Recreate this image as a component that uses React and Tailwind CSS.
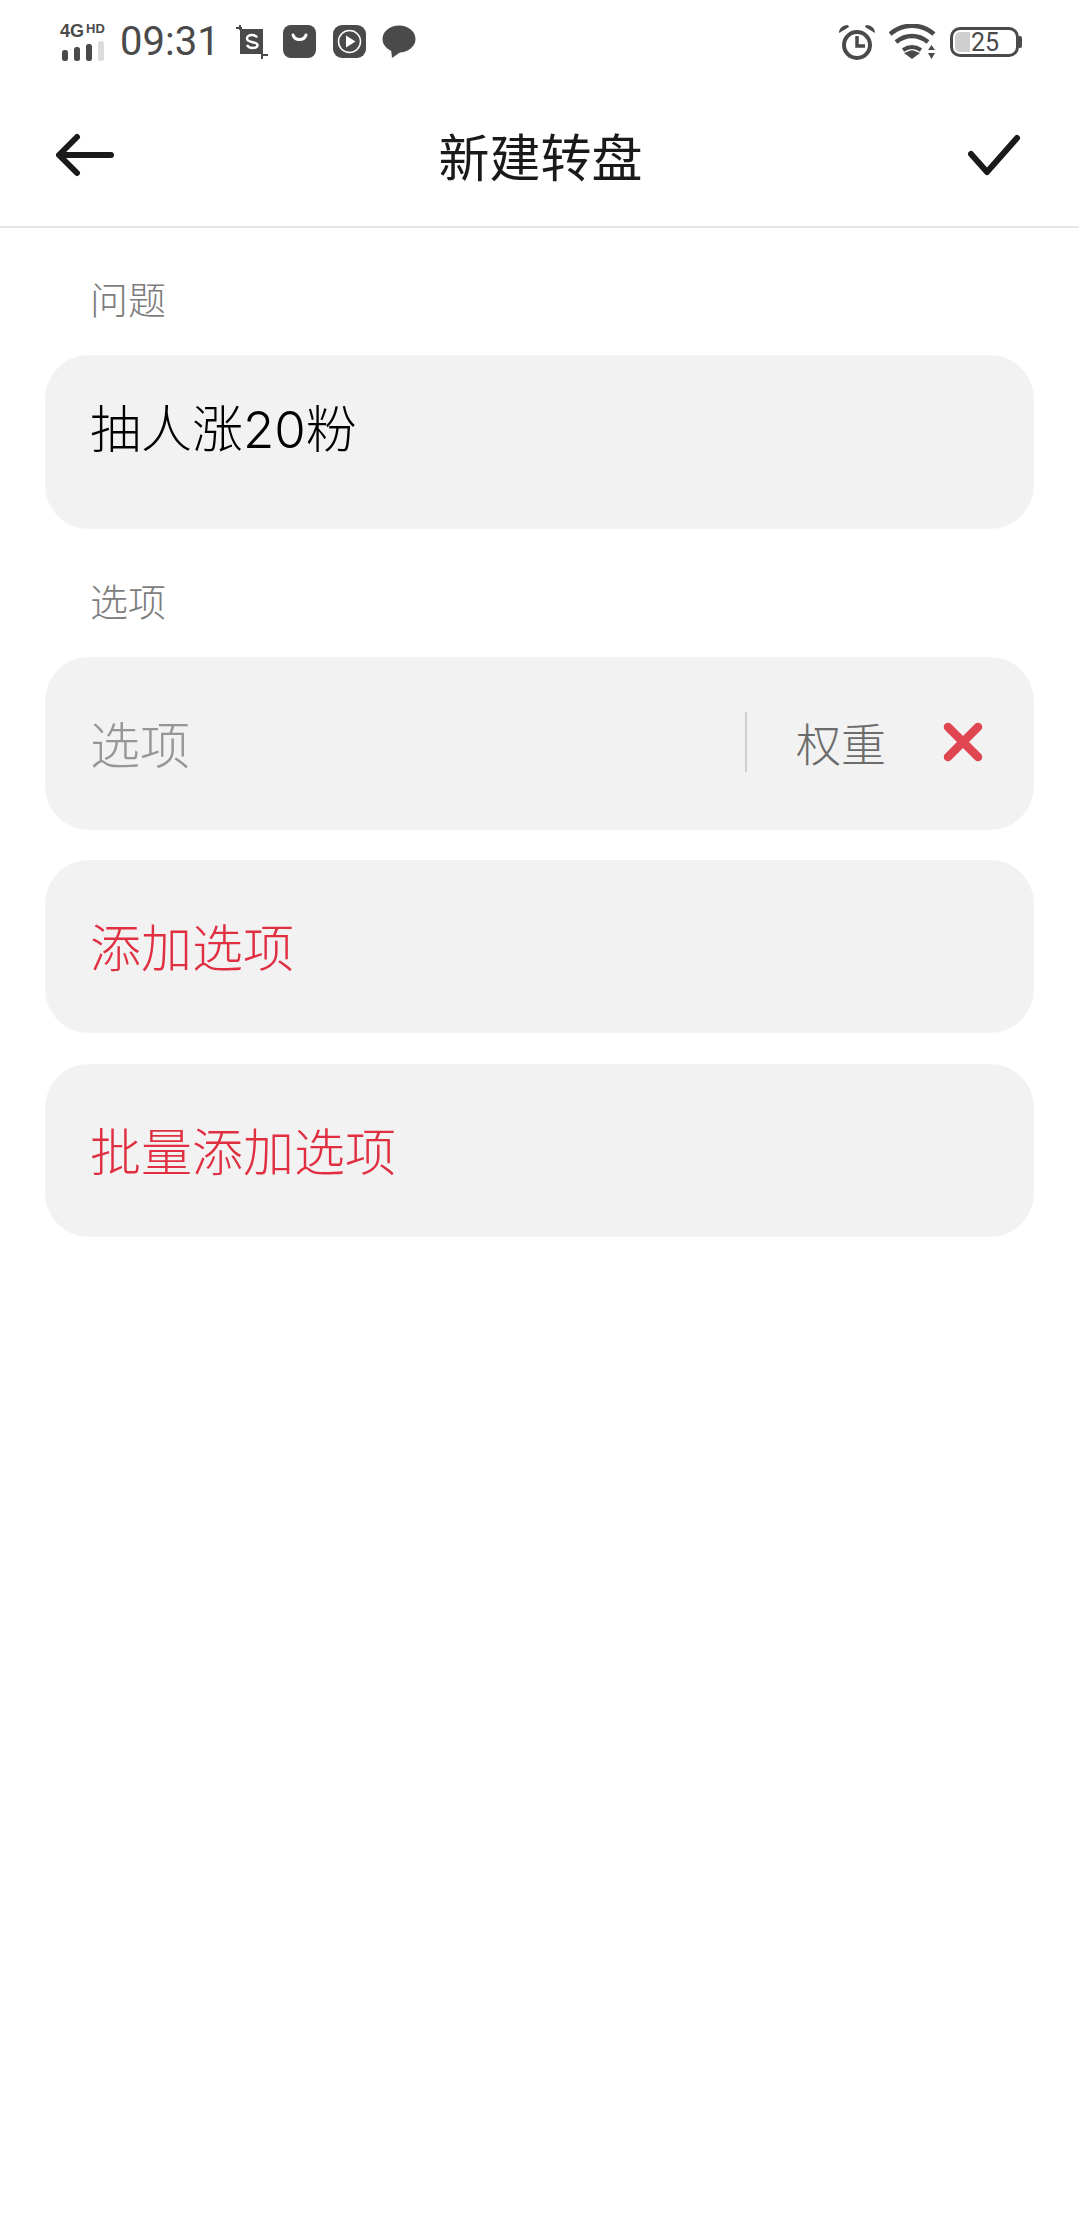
import React from "react";

const font = { fontFamily: '"Noto Sans CJK SC", "Noto Sans", sans-serif' };

function Signal() {
  return (
    <div className="ml-[60px] flex w-[48px] flex-col">
      <div className="flex h-[16px] items-start font-['Liberation_Sans'] font-bold text-[#4a4a4a]">
        <span className="text-[18px] leading-[16px]">4G</span>
        <span className="ml-[2px] text-[13px] leading-[11px]">HD</span>
      </div>
      <svg width="48" height="20" viewBox="0 0 48 20" className="mt-[2px]">
        <rect x="2" y="9" width="6" height="11" rx="2.500" fill="#4a4a4a" />
        <rect x="14" y="6" width="6" height="14" rx="2.500" fill="#4a4a4a" />
        <rect x="26" y="3" width="6" height="17" rx="2.500" fill="#4a4a4a" />
        <rect x="38" y="0" width="6" height="20" rx="2.500" fill="#dcdcdc" />
      </svg>
    </div>
  );
}

function StatusLeft() {
  return (
    <div className="flex items-center">
      <Signal />
      <span className="ml-[12px] text-[40px] leading-none text-[#4a4a4a] font-['Roboto'] font-normal">09:31</span>
      <svg width="34" height="34" viewBox="0 0 34 34" className="ml-[15px]">
        <path d="M1 3h6M5 0v5M27 29v5M27 30h6" stroke="#4a4a4a" strokeWidth="2" />
        <rect x="5" y="4" width="23" height="25" fill="#4a4a4a" />
        <path d="M22 12.500c-1-2-3-2.500-5-2.500-3 0-5 1.200-5 3.500 0 5 10.500 2.500 10.500 6.500 0 2-2.200 3-5 3-2.500 0-4.500-.8-5.500-3" stroke="#fff" strokeWidth="2.400" fill="none" />
      </svg>
      <svg width="34" height="34" viewBox="0 0 34 34" className="ml-[14px]">
        <rect x="0" y="0" width="33" height="33" rx="8" fill="#4a4a4a" />
        <path d="M10 10c2 6 11 6 13 0" stroke="#fff" strokeWidth="3" fill="none" strokeLinecap="round" />
      </svg>
      <svg width="34" height="34" viewBox="0 0 34 34" className="ml-[16px]">
        <rect x="0" y="0" width="33" height="33" rx="9" fill="#4a4a4a" />
        <circle cx="16.500" cy="16.500" r="11" stroke="#fff" strokeWidth="1.500" fill="none" />
        <path d="M13 10.500l9.500 6-9.500 6z" fill="#fff" />
      </svg>
      <svg width="34" height="34" viewBox="0 0 34 34" className="ml-[15px]">
        <ellipse cx="17" cy="14" rx="16.500" ry="13.500" fill="#4a4a4a" />
        <path d="M9 24l1 9 10-7z" fill="#4a4a4a" />
      </svg>
    </div>
  );
}

function StatusRight() {
  return (
    <div className="flex items-center">
      <svg width="36" height="36" viewBox="0 0 36 36" className="mt-[-1px]">
        <circle cx="18" cy="21" r="13" stroke="#4a4a4a" strokeWidth="4" fill="none" />
        <path d="M18 12v10h8" stroke="#4a4a4a" strokeWidth="3.500" fill="none" />
        <path d="M0 9c0-5 4-8 9-8l1 2zM36 9c0-5-4-8-9-8l-1 2z" fill="#4a4a4a" />
      </svg>
      <svg width="48" height="36" viewBox="0 0 48 36" className="ml-[14px]">
        <path d="M1 10c13-11 31-11 44 0" stroke="#4a4a4a" strokeWidth="4.500" fill="none" />
        <path d="M7 18c10-8 22-8 32 0" stroke="#4a4a4a" strokeWidth="4.500" fill="none" />
        <path d="M14 26c6-4 12-4 18 0" stroke="#4a4a4a" strokeWidth="4" fill="none" />
        <path d="M15 29l8-3 8 3-8 6z" fill="#4a4a4a" />
        <path d="M39 26l3.500-5 3.500 5zM39 29h7l-3.500 6z" fill="#4a4a4a" />
      </svg>
      <div className="ml-[13px] flex items-center">
        <div className="flex h-[30px] w-[69px] items-center rounded-[10px] border-[3px] border-[#4a4a4a]">
          <div className="ml-[2px] h-[20px] w-[15px] rounded-l-[5px] bg-[#cfcfcf]" />
          <span className="ml-[1px] text-[25px] leading-none text-[#4a4a4a] font-['Roboto'] font-normal">25</span>
        </div>
        <div className="h-[12px] w-[3px] rounded-r-[2px] bg-[#4a4a4a]" />
      </div>
    </div>
  );
}

function Card({ children, className = "" }) {
  return (
    <div className={"mx-[45px] flex h-[173px] items-center rounded-[44px] bg-[#f2f2f2] pb-[3px] pl-[46px] " + className}>
      {children}
    </div>
  );
}

export default function App() {
  return (
    <div className="h-[2213px] w-[1079px] bg-white" style={font}>
      <header className="h-[228px] border-b-2 border-[#e6e6e6]">
        <div className="flex h-[84px] items-center justify-between pr-[57px]">
          <StatusLeft />
          <StatusRight />
        </div>
        <div className="flex h-[142px] items-center justify-between pl-[56px] pr-[58px]">
          <svg width="58" height="44" viewBox="0 0 58 44">
            <path d="M55 22H4M21 4L3 22l18 18" stroke="#1a1a1a" strokeWidth="6" fill="none" strokeLinecap="round" strokeLinejoin="round" />
          </svg>
          <h1 className="text-[51px] font-normal leading-none text-[#1a1a1a]">新建转盘</h1>
          <svg width="54" height="42" viewBox="0 0 54 42">
            <path d="M4 20l16 18L50 4" stroke="#1a1a1a" strokeWidth="6" fill="none" strokeLinecap="round" strokeLinejoin="round" />
          </svg>
        </div>
      </header>

      <div className="flex h-[127px] items-center pl-[90px] pt-[12px] text-[38px] font-light leading-none text-[#7d7d7d]">问题</div>
      <div className="mx-[45px] h-[174px] rounded-[44px] bg-[#f2f2f2] pl-[45px] pt-[39px] text-[51px] font-light leading-[64px] text-[#000000]">
        抽人涨<span className="font-['Inter'] font-light">20</span>粉
      </div>

      <div className="flex h-[128px] items-center pl-[90px] pt-[13px] text-[38px] font-light leading-none text-[#7d7d7d]">选项</div>
      <Card>
        <span className="ml-[-1px] flex-1 text-[50px] font-light leading-none text-[#969696]">选项</span>
        <div className="h-[60px] w-[2px] bg-[#cfcfcf]" />
        <span className="ml-[49px] text-[45px] font-light leading-none text-[#6b6b6b]">权重</span>
        <svg width="40" height="40" viewBox="0 0 40 40" className="ml-[57px] mr-[51px]">
          <path d="M5 5l30 30M35 5L5 35" stroke="#e04552" strokeWidth="8.500" strokeLinecap="round" />
        </svg>
      </Card>
      <Card className="mt-[30px]">
        <span className="ml-[-1px] text-[51px] font-light leading-none text-[#e02f40]">添加选项</span>
      </Card>
      <Card className="mt-[31px]">
        <span className="ml-[-1px] text-[51px] font-light leading-none text-[#e02f40]">批量添加选项</span>
      </Card>
    </div>
  );
}
